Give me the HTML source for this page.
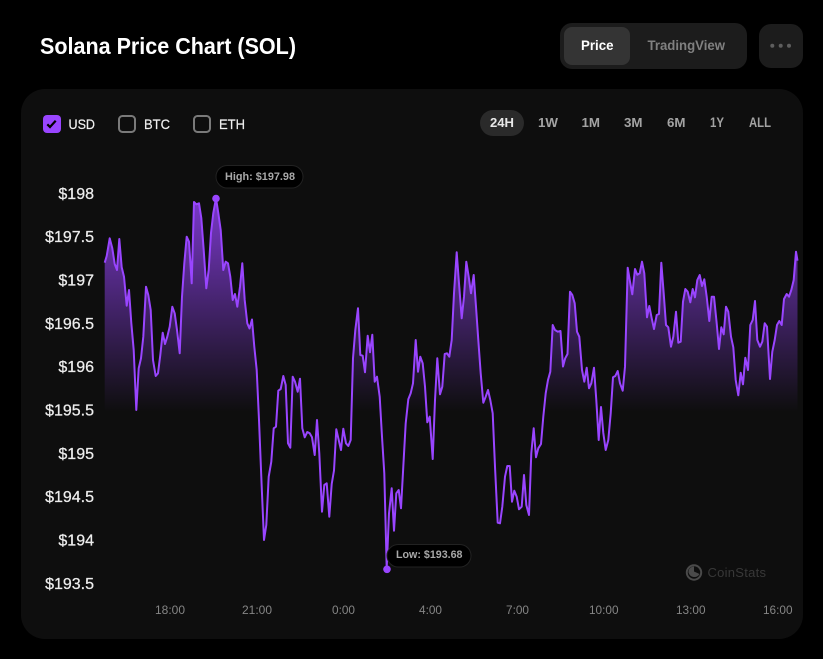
<!DOCTYPE html>
<html>
<head>
<meta charset="utf-8">
<style>
html,body{margin:0;padding:0;background:#000;width:823px;height:659px;overflow:hidden}
svg{display:block;position:absolute;left:0;top:0}
text{font-family:"Liberation Sans",sans-serif}
.y{font-size:16px;fill:#ededed;text-anchor:end;stroke:#ededed;stroke-width:.25px}
.x{font-size:12px;fill:#858585}
.r{font-size:13px;font-weight:bold;fill:#a3a3a3}
.c{font-size:14px;fill:#f0f0f0;stroke:#f0f0f0;stroke-width:.2px}
</style>
</head>
<body>
<svg width="823" height="659" viewBox="0 0 823 659" xmlns="http://www.w3.org/2000/svg">
<defs>
<linearGradient id="g" gradientUnits="userSpaceOnUse" x1="0" y1="198" x2="0" y2="412">
<stop offset="0" stop-color="#9945ff" stop-opacity=".78"/>
<stop offset="1" stop-color="#9945ff" stop-opacity="0"/>
</linearGradient>
</defs>
<rect width="823" height="659" fill="#000"/>
<text x="40" y="54" font-size="23" font-weight="bold" fill="#fff" textLength="256" lengthAdjust="spacingAndGlyphs">Solana Price Chart (SOL)</text>

<rect x="560" y="23" width="187" height="46" rx="12" fill="#1c1c1c"/>
<rect x="564" y="27" width="66" height="38" rx="8" fill="#343434"/>
<text x="581" y="50" font-size="14" font-weight="bold" fill="#fff" textLength="32.5" lengthAdjust="spacingAndGlyphs">Price</text>
<text x="647.5" y="50" font-size="14" font-weight="bold" fill="#808080" textLength="77.5" lengthAdjust="spacingAndGlyphs">TradingView</text>
<rect x="759" y="24" width="44" height="44" rx="12" fill="#1c1c1c"/>
<circle cx="772.3" cy="45.8" r="2" fill="#5e5e5e"/><circle cx="780.7" cy="45.8" r="2" fill="#5e5e5e"/><circle cx="789" cy="45.8" r="2" fill="#5e5e5e"/>

<rect x="21" y="89" width="782" height="550" rx="24" fill="#0e0e0e"/>

<rect x="43" y="115" width="18" height="18" rx="4" fill="#9945ff"/>
<path d="M47.3 124.3L50 127 55.7 120.7" fill="none" stroke="#000" stroke-width="2.2"/>
<text class="c" x="68.5" y="129" textLength="26.5" lengthAdjust="spacingAndGlyphs">USD</text>
<rect x="119" y="116" width="16" height="16" rx="3.5" fill="none" stroke="#7a7a7a" stroke-width="2"/>
<text class="c" x="144" y="129" textLength="26" lengthAdjust="spacingAndGlyphs">BTC</text>
<rect x="194" y="116" width="16" height="16" rx="3.5" fill="none" stroke="#7a7a7a" stroke-width="2"/>
<text class="c" x="219" y="129" textLength="26" lengthAdjust="spacingAndGlyphs">ETH</text>

<rect x="480" y="110" width="44" height="26" rx="13" fill="#2a2a2a"/>
<text class="r" x="490" y="127" style="fill:#e8e8e8" textLength="24" lengthAdjust="spacingAndGlyphs">24H</text>
<text class="r" x="538" y="127" textLength="20" lengthAdjust="spacingAndGlyphs">1W</text>
<text class="r" x="581.5" y="127" textLength="18.5" lengthAdjust="spacingAndGlyphs">1M</text>
<text class="r" x="624" y="127" textLength="18.5" lengthAdjust="spacingAndGlyphs">3M</text>
<text class="r" x="667" y="127" textLength="18.5" lengthAdjust="spacingAndGlyphs">6M</text>
<text class="r" x="710" y="127" textLength="14" lengthAdjust="spacingAndGlyphs" font-size="14" style="font-size:14px">1Y</text>
<text class="r" x="749" y="127" textLength="22" lengthAdjust="spacingAndGlyphs" style="font-size:14px">ALL</text>

<text class="y" x="94" y="199">$198</text>
<text class="y" x="94" y="242">$197.5</text>
<text class="y" x="94" y="285.5">$197</text>
<text class="y" x="94" y="329">$196.5</text>
<text class="y" x="94" y="372">$196</text>
<text class="y" x="94" y="415.5">$195.5</text>
<text class="y" x="94" y="459">$195</text>
<text class="y" x="94" y="502">$194.5</text>
<text class="y" x="94" y="545.5">$194</text>
<text class="y" x="94" y="589">$193.5</text>

<text class="x" x="155" y="614" textLength="30" lengthAdjust="spacingAndGlyphs">18:00</text>
<text class="x" x="242" y="614" textLength="30" lengthAdjust="spacingAndGlyphs">21:00</text>
<text class="x" x="332" y="614" textLength="23" lengthAdjust="spacingAndGlyphs">0:00</text>
<text class="x" x="419" y="614" textLength="23" lengthAdjust="spacingAndGlyphs">4:00</text>
<text class="x" x="506" y="614" textLength="23" lengthAdjust="spacingAndGlyphs">7:00</text>
<text class="x" x="589" y="614" textLength="29.5" lengthAdjust="spacingAndGlyphs">10:00</text>
<text class="x" x="676" y="614" textLength="29.5" lengthAdjust="spacingAndGlyphs">13:00</text>
<text class="x" x="763" y="614" textLength="29.5" lengthAdjust="spacingAndGlyphs">16:00</text>

<path fill="url(#g)" d="M104.7 262.7L106.7 256 109.7 238.3 112.3 248.3 114.7 264 117 270 119.3 239 121.7 267.3 124 276.7 126.7 305.7 129 290 131.3 323 133.7 350 136.3 410 138.7 368.3 141 358.3 143.3 336.7 146 286.7 148.3 295 150.7 310 153 360 155.7 376 158 373.3 160.3 355 162.7 332.7 165 344 167.3 336.7 169.7 326.7 172.3 306.7 174.7 313.3 177 330 179.7 353.3 182 296.7 184.3 263.3 186.7 236.7 189 241.7 191.7 283.3 194 202 196.3 204.3 199 203.3 201.3 218 203.7 250 206.3 288.3 208.7 270 211 233 213.3 213 216 198.3 218.3 213 220.7 230 223.3 270 225.7 261.7 228 263.3 230.3 276.7 232.7 300 235 294 237.3 306.7 240 286.7 242.3 263.3 244.7 300 247.3 323.3 249.5 328.5 252 319.5 254.3 346.7 256.7 370 259 420 261.7 486.7 264 540 266.3 525 268.7 476.7 271.3 461.7 273.7 428.3 276 426.7 278.3 390.7 280.7 389 283.3 376 285.7 385 288 443.3 290.3 447.7 292.7 376.7 295 381.7 297.7 391.7 300 378.7 302.3 428.3 304.7 437.3 307.3 432 309.7 433.3 312 437.3 314.7 455 317 420 319.3 453.3 322 511.7 324.3 485 326.7 483.3 329.3 516.7 331.7 484 334 470.5 336.3 429.3 338.7 440 341 450 343.3 428.7 346 443.3 348.3 446 350.7 440 353 358.3 355.3 330 358 308.3 360.3 355 362.7 355.7 365 372.3 367.7 335.7 370 352.3 372.3 334.7 374.7 381.7 377 376.7 379.7 396.7 382 436.7 384.3 473.3 386.7 568 389 513.3 391.7 488.3 394 530.7 396.3 493.3 398.7 490 401 508.3 403.3 466.7 405.7 423.3 408.3 399.3 410.7 393.3 413 383.3 415.7 340 418 371.7 420.3 356.7 422.7 363.3 425 386.7 427.3 422.3 429.7 416.7 432.7 459 435 400 437.3 358.3 440 394.3 442.3 386.7 444.7 354 447 353.3 449.3 356.7 451.7 340 454 293.3 456.7 252.3 459 283.3 461.7 318.3 464 296.7 466.3 261.7 468.7 276.7 471 293.3 473.7 275 476 306.7 478.3 340 480.7 373.3 483.3 402.7 485.7 396.7 488 390 490.3 400 492.7 413.3 495 466.7 497.7 522.7 500 523.3 502.3 506.7 505 476.7 507.3 466 509.7 466 512 501.7 514.3 490.7 516.7 496.7 519 509.3 521.7 506.7 524 475 526.3 505 529 515 531.3 453.3 533.7 428.3 536 457.3 538.3 448.3 541 444 543.3 416.7 545.7 393.3 548 380 550.3 371.7 552.7 325 555 330 557.7 331.7 560.5 331 563 366.5 565.2 358.3 567.5 354 570 291.7 572.3 295 574.7 303.3 577 331.7 579.3 336.7 582 370 584.3 381.7 586.7 367.7 589 388.3 591.3 383.3 594 367.7 596.3 400 598.7 440 601 407 603.3 433 605.7 450 608.3 440 610.7 413.3 613 377.3 615.3 376 617.7 371 620 383.3 622.7 390.7 625 366.7 627.7 267.7 630 281.7 632.3 294.3 635 269 637.3 274.7 639.7 273.3 642 261.7 644.3 273.3 647 317.3 649.3 306 651.7 318.3 654 329 656.7 315 659 314 661.3 262.7 663.7 293.3 666 325 668.3 327.3 671 346.7 673.3 336.7 676 311.7 678.3 342.7 680.7 341.7 683 301.7 685.3 289 687.7 291.7 690.3 302.3 692.7 289 695 297.3 697.3 280 699.7 275 702 286 704.3 279.3 706.7 296.7 709.3 321 711.7 296.7 714 296.7 716.7 323.3 719 349 721.3 327.3 723.7 334.3 726 306.7 728.3 311.7 731 336.7 733.3 347.3 735.7 380 738.3 395.3 740.7 372.7 743 384.3 745.3 357.7 748 370 750.3 325 752.7 320 755 301 757.3 340 760 346.7 762.3 341.7 764.7 323.3 767 326.7 770 379 772.3 351.7 774.7 340 777 325 779.3 321 781.7 325 784 299 786.7 294 789 296.7 791.3 290 793.7 280 796 251.7 797.5 260.7V600H104.7Z"/>
<path fill="none" stroke="#9945ff" stroke-width="2" stroke-linejoin="round" d="M104.7 262.7L106.7 256 109.7 238.3 112.3 248.3 114.7 264 117 270 119.3 239 121.7 267.3 124 276.7 126.7 305.7 129 290 131.3 323 133.7 350 136.3 410 138.7 368.3 141 358.3 143.3 336.7 146 286.7 148.3 295 150.7 310 153 360 155.7 376 158 373.3 160.3 355 162.7 332.7 165 344 167.3 336.7 169.7 326.7 172.3 306.7 174.7 313.3 177 330 179.7 353.3 182 296.7 184.3 263.3 186.7 236.7 189 241.7 191.7 283.3 194 202 196.3 204.3 199 203.3 201.3 218 203.7 250 206.3 288.3 208.7 270 211 233 213.3 213 216 198.3 218.3 213 220.7 230 223.3 270 225.7 261.7 228 263.3 230.3 276.7 232.7 300 235 294 237.3 306.7 240 286.7 242.3 263.3 244.7 300 247.3 323.3 249.5 328.5 252 319.5 254.3 346.7 256.7 370 259 420 261.7 486.7 264 540 266.3 525 268.7 476.7 271.3 461.7 273.7 428.3 276 426.7 278.3 390.7 280.7 389 283.3 376 285.7 385 288 443.3 290.3 447.7 292.7 376.7 295 381.7 297.7 391.7 300 378.7 302.3 428.3 304.7 437.3 307.3 432 309.7 433.3 312 437.3 314.7 455 317 420 319.3 453.3 322 511.7 324.3 485 326.7 483.3 329.3 516.7 331.7 484 334 470.5 336.3 429.3 338.7 440 341 450 343.3 428.7 346 443.3 348.3 446 350.7 440 353 358.3 355.3 330 358 308.3 360.3 355 362.7 355.7 365 372.3 367.7 335.7 370 352.3 372.3 334.7 374.7 381.7 377 376.7 379.7 396.7 382 436.7 384.3 473.3 386.7 568 389 513.3 391.7 488.3 394 530.7 396.3 493.3 398.7 490 401 508.3 403.3 466.7 405.7 423.3 408.3 399.3 410.7 393.3 413 383.3 415.7 340 418 371.7 420.3 356.7 422.7 363.3 425 386.7 427.3 422.3 429.7 416.7 432.7 459 435 400 437.3 358.3 440 394.3 442.3 386.7 444.7 354 447 353.3 449.3 356.7 451.7 340 454 293.3 456.7 252.3 459 283.3 461.7 318.3 464 296.7 466.3 261.7 468.7 276.7 471 293.3 473.7 275 476 306.7 478.3 340 480.7 373.3 483.3 402.7 485.7 396.7 488 390 490.3 400 492.7 413.3 495 466.7 497.7 522.7 500 523.3 502.3 506.7 505 476.7 507.3 466 509.7 466 512 501.7 514.3 490.7 516.7 496.7 519 509.3 521.7 506.7 524 475 526.3 505 529 515 531.3 453.3 533.7 428.3 536 457.3 538.3 448.3 541 444 543.3 416.7 545.7 393.3 548 380 550.3 371.7 552.7 325 555 330 557.7 331.7 560.5 331 563 366.5 565.2 358.3 567.5 354 570 291.7 572.3 295 574.7 303.3 577 331.7 579.3 336.7 582 370 584.3 381.7 586.7 367.7 589 388.3 591.3 383.3 594 367.7 596.3 400 598.7 440 601 407 603.3 433 605.7 450 608.3 440 610.7 413.3 613 377.3 615.3 376 617.7 371 620 383.3 622.7 390.7 625 366.7 627.7 267.7 630 281.7 632.3 294.3 635 269 637.3 274.7 639.7 273.3 642 261.7 644.3 273.3 647 317.3 649.3 306 651.7 318.3 654 329 656.7 315 659 314 661.3 262.7 663.7 293.3 666 325 668.3 327.3 671 346.7 673.3 336.7 676 311.7 678.3 342.7 680.7 341.7 683 301.7 685.3 289 687.7 291.7 690.3 302.3 692.7 289 695 297.3 697.3 280 699.7 275 702 286 704.3 279.3 706.7 296.7 709.3 321 711.7 296.7 714 296.7 716.7 323.3 719 349 721.3 327.3 723.7 334.3 726 306.7 728.3 311.7 731 336.7 733.3 347.3 735.7 380 738.3 395.3 740.7 372.7 743 384.3 745.3 357.7 748 370 750.3 325 752.7 320 755 301 757.3 340 760 346.7 762.3 341.7 764.7 323.3 767 326.7 770 379 772.3 351.7 774.7 340 777 325 779.3 321 781.7 325 784 299 786.7 294 789 296.7 791.3 290 793.7 280 796 251.7 797.5 260.7"/>

<circle cx="216" cy="198.5" r="3.8" fill="#9945ff"/>
<circle cx="387" cy="569.3" r="3.8" fill="#9945ff"/>

<rect x="216" y="165.5" width="87" height="22.5" rx="11.2" fill="#000" stroke="#222" stroke-width="1"/>
<text x="225" y="180" font-size="11" font-weight="bold" fill="#a8a8a8" textLength="70" lengthAdjust="spacingAndGlyphs">High: $197.98</text>
<rect x="387" y="544.5" width="84" height="22.5" rx="11.2" fill="#000" stroke="#222" stroke-width="1"/>
<text x="396" y="558" font-size="11" font-weight="bold" fill="#a8a8a8" textLength="66.5" lengthAdjust="spacingAndGlyphs">Low: $193.68</text>

<circle cx="694" cy="572.5" r="7.2" fill="none" stroke="#4a4a4a" stroke-width="2"/>
<path d="M688.5 572.5a5.5 5.5 0 0 1 5.5-6v5l5.5 2.5a6 6 0 0 1-11 -1.5z" fill="#4a4a4a"/>
<text x="707.5" y="577" font-size="13" fill="#383838" textLength="58.5" lengthAdjust="spacing">CoinStats</text>
</svg>
</body>
</html>
